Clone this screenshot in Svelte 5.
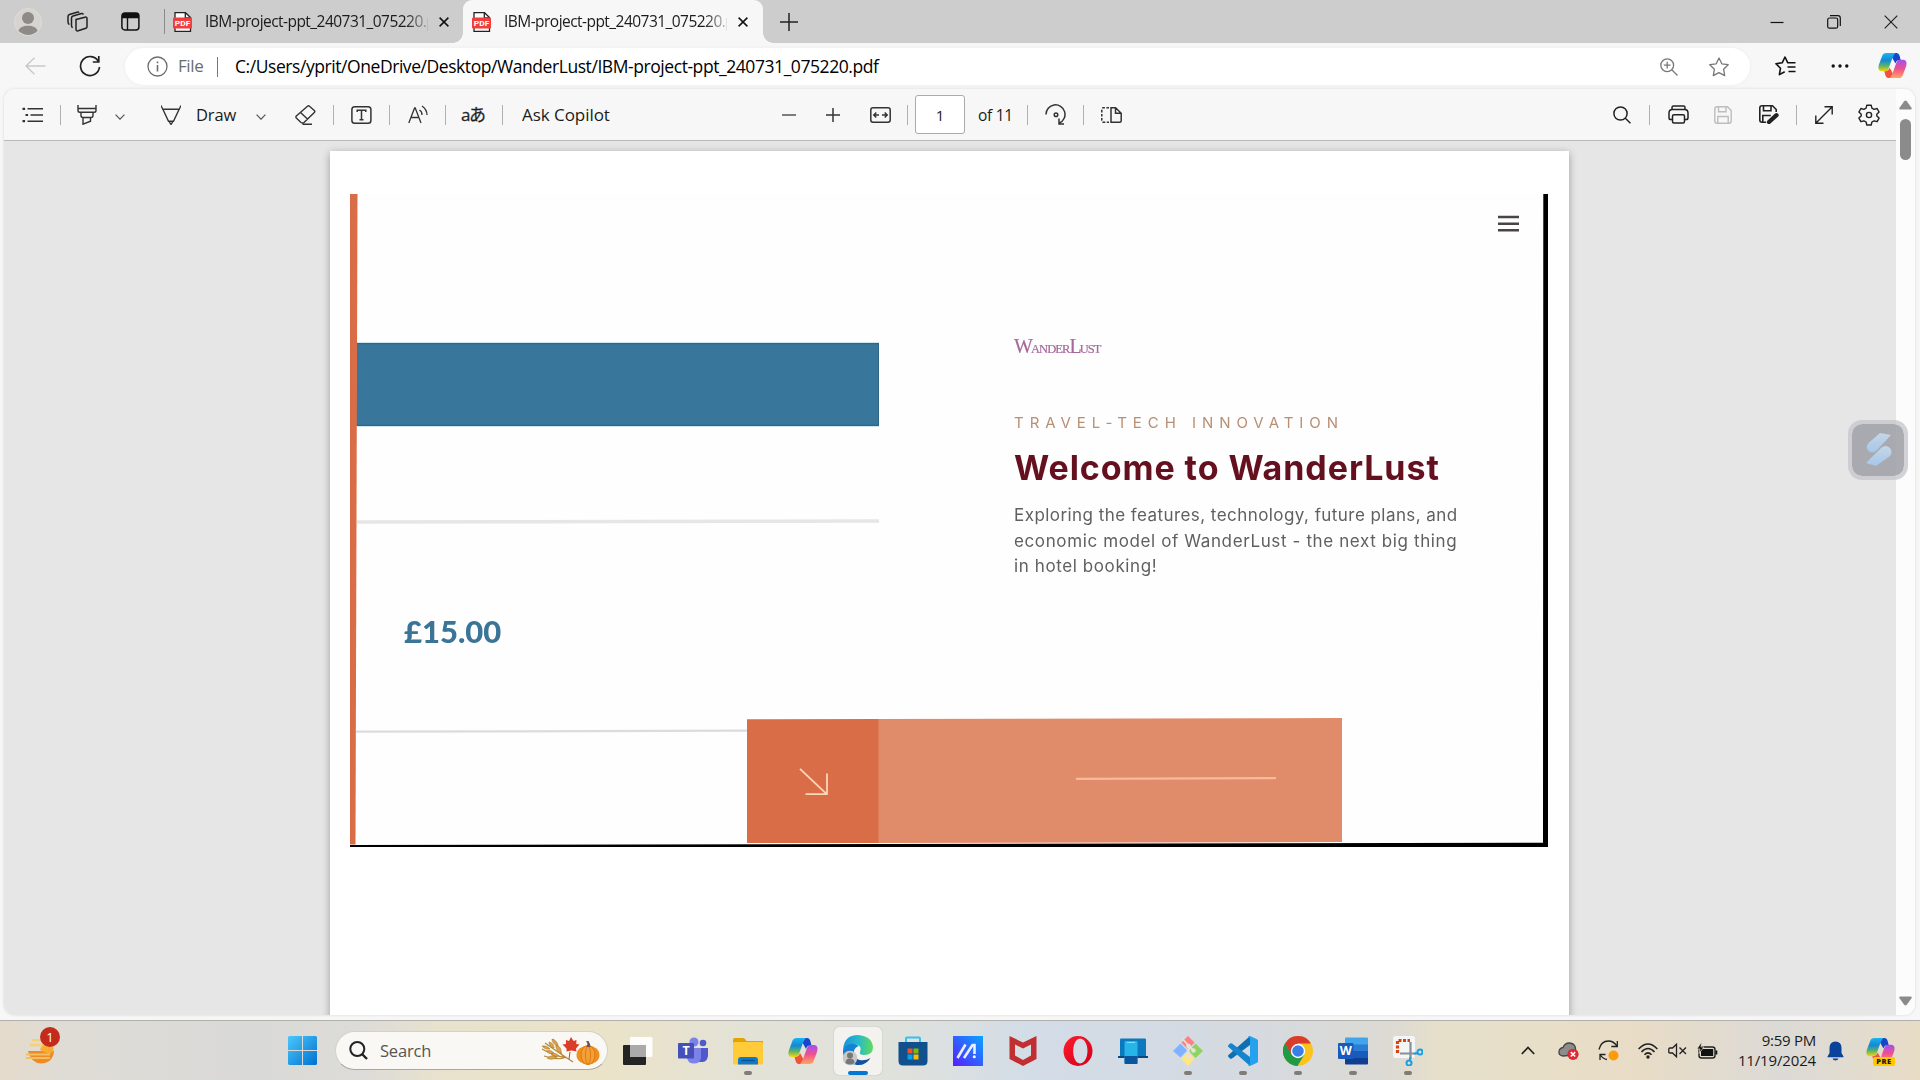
<script>
  const tabs = [
    { title: 'IBM-project-ppt_240731_075220.pdf', active: false },
    { title: 'IBM-project-ppt_240731_075220.pdf', active: true }
  ];
</script>

{#snippet pdf()}
  <svg class="pdf" width="20" height="20" viewBox="0 0 20 20">
    <path d="M2 .7h10.5L17.5 5.500V19.300H2z" fill="#fff" stroke="#222" stroke-width="1.300" />
    <path d="M12.300.8v5h5" fill="none" stroke="#222" stroke-width="1.300" />
    <rect x="0" y="5.500" width="19" height="11" rx="1.200" fill="#f03e3e" />
    <text x="9.500" y="14" text-anchor="middle" class="pdf-label" textLength="15.500" lengthAdjust="spacingAndGlyphs">PDF</text>
  </svg>
{/snippet}

{#snippet close()}
  <svg class="x" width="10" height="10" viewBox="0 0 10 10"><path d="M.6.6l8.800 8.800M9.400.6L.6 9.400" stroke="#111" stroke-width="1.500" /></svg>
{/snippet}

{#snippet copilot(size)}
  <svg class="cop" width={size} height={size * 28 / 30} viewBox="0 0 30 28">
    <defs>
      <linearGradient id="cl" x1="0" y1="0" x2="0" y2="1">
        <stop offset="0" stop-color="#19b4ee" /><stop offset=".4" stop-color="#1488d8" /><stop offset=".7" stop-color="#58b56a" /><stop offset="1" stop-color="#ffd500" />
      </linearGradient>
      <linearGradient id="cr" x1="0" y1="0" x2="0" y2="1">
        <stop offset="0" stop-color="#a24ff0" /><stop offset=".5" stop-color="#f0518f" /><stop offset="1" stop-color="#ffa75c" />
      </linearGradient>
    </defs>
    <path d="M12 1H19C22 1 22.500 4 23.500 8.500C20 8.500 19 9 18 12z" fill="#1746cc" />
    <path d="M18 27H11C8 27 7.500 24 6.500 19.500C10 19.500 11 19 12 16z" fill="#f2513b" />
    <path d="M9 1H18C15 4 13 12 11 17C10 19 9 20 7 20H4C0 20 0 16 1 13L4 5C5 2 6 1 9 1Z" fill="url(#cl)" />
    <path d="M21 27H12C15 24 17 16 19 11C20 9 21 8 23 8H26C30 8 30 12 29 15L26 23C25 26 24 27 21 27Z" fill="url(#cr)" />
  </svg>
{/snippet}

<div class="screen">
  <header class="tabstrip">
    <svg class="profile" width="28" height="28" viewBox="0 0 28 28"><circle cx="14" cy="14" r="13.500" fill="#d6d4d0" stroke="#dedcd2" /><circle cx="14" cy="10" r="6" fill="#8e8a86" /><path d="M4.500 23c1-7 18-7 19 0q-9 8-19 0" fill="#8e8a86" /></svg>
    <svg class="spaces" width="22" height="22" viewBox="0 0 22 22" fill="none" stroke="#222" stroke-width="1.500"><path d="M9 8.500l9-2.300q2-.5 2 1.500v8q0 1.200-1.200 1.600l-7.600 2.500q-2.200.6-2.200-1.500zM5.800 16.500q-1.300-.2-1.300-2V7q0-1.500 1.500-2l8.500-2.400q1.500-.3 1.700 1M2.500 13.500Q1 13 1 11V5.500Q1 4 2.500 3.500L10 1.200q1.600-.4 2 .6" /></svg>
    <svg class="actions" width="19" height="19" viewBox="0 0 19 19"><rect x=".9" y=".9" width="17" height="17" rx="3" fill="none" stroke="#111" stroke-width="1.500" /><path d="M1 4q0-3 3-3h11q3 0 3 3v2.200H1z" fill="#111" /><path d="M6.500 5v13" stroke="#111" stroke-width="1.400" /></svg>
    <i class="tab-div"></i>
    {#each tabs as tab}
      <div class="tab" class:active={tab.active}>
        {@render pdf()}
        <span class="tab-title">{tab.title}</span>
        {@render close()}
      </div>
    {/each}
    <svg class="newtab" width="18" height="18" viewBox="0 0 18 18"><path d="M9 0v18M0 9h18" stroke="#222" stroke-width="1.500" /></svg>
    <div class="wincontrols">
      <svg width="14" height="14" viewBox="0 0 14 14"><path d="M.5 7.500h13" stroke="#111" stroke-width="1.200" /></svg>
      <svg width="14" height="14" viewBox="0 0 14 14" fill="none" stroke="#111" stroke-width="1.200"><rect x=".7" y="3" width="10" height="10.200" rx="1.800" /><path d="M3 .7h8q2.300 0 2.300 2.300v8" /></svg>
      <svg width="14" height="14" viewBox="0 0 14 14"><path d="M.7.7l12.600 12.600M13.300.7L.7 13.300" stroke="#222" stroke-width="1.200" /></svg>
    </div>
  </header>

  <div class="addressrow">
    <svg class="back" width="21" height="18" viewBox="0 0 21 18"><path d="M9.500.8L1 9l8.500 8.200M1 9h19.500" fill="none" stroke="#c9c9c9" stroke-width="1.400" /></svg>
    <svg class="reload" width="22" height="22" viewBox="0 0 22 22" fill="none" stroke="#222" stroke-width="1.700"><path d="M19.300 6.300A9.500 9.500 0 1 0 20.500 12M19.800 1v6h-6" /></svg>
    <div class="pill">
      <svg class="info" width="21" height="21" viewBox="0 0 21 21" fill="none" stroke="#6d6d6d" stroke-width="1.300"><circle cx="10.500" cy="10.500" r="9.500" /><path d="M10.500 9v6.500M10.500 5.500v1.800" stroke-width="1.600" /></svg>
      <span class="file">File</span>
      <i class="pill-div"></i>
      <span class="url">C:/Users/yprit/OneDrive/Desktop/WanderLust/IBM-project-ppt_240731_075220.pdf</span>
      <svg class="zoomi" width="18" height="18" viewBox="0 0 18 18" fill="none" stroke="#777" stroke-width="1.300"><circle cx="7.200" cy="7.200" r="6.400" /><path d="M12 12l5.500 5.500M7.200 3.800v6.800M3.800 7.200h6.800" /></svg>
      <svg class="star" width="20" height="20" viewBox="0 0 20 20" fill="none" stroke="#777" stroke-width="1.300" stroke-linejoin="round"><path d="M10 1l2.800 5.800 6.400.9-4.600 4.500 1.100 6.400L10 15.600l-5.700 3 1.100-6.400L.8 7.700l6.400-.9z" /></svg>
    </div>
    <svg class="favs" width="21" height="20" viewBox="0 0 21 20" fill="none" stroke="#111" stroke-width="1.600" stroke-linejoin="round"><path d="M14 6.800h-1.200L10 1 7.200 6.800.9 7.700l4.600 4.500-1.100 6.400 5.300-2.800M14 6.800h6.500M12.500 11h8M13.500 15.500h7" /></svg>
    <svg class="dots" width="18" height="6" viewBox="0 0 18 6" fill="#111"><circle cx="2.200" cy="3" r="1.700" /><circle cx="9" cy="3" r="1.700" /><circle cx="15.800" cy="3" r="1.700" /></svg>
    {@render copilot(29)}
  </div>

  <main class="viewer">
    <div class="content">
      <div class="toolbar">
        <svg class="t-list" width="22" height="16" viewBox="0 0 22 16" stroke="#333" stroke-width="1.500"><path d="M5.500 1.800H21M8.500 8H21M5.500 14.200H21" /><path d="M.5 1.800h2.600M3.500 8h2.600M.5 14.200h2.600" stroke-width="2.200" /></svg>
        <i class="sep s1"></i>
        <svg class="t-hl" width="20" height="20" viewBox="0 0 20 20" fill="none" stroke="#333" stroke-width="1.400"><path d="M1 0v5.500q0 1.800 1.800 1.800h14.400q1.800 0 1.800-1.800V0M1.500 3.500h17M4 7.500v3q0 2 2 2h8q2 0 2-2v-3M6 12.500v6.700l7.500-3v-3.700" /></svg>
        <svg class="t-ch1" width="10" height="6" viewBox="0 0 10 6"><path d="M.6.7L5 5.200 9.400.7" fill="none" stroke="#555" stroke-width="1.200" /></svg>
        <svg class="t-pen" width="20" height="20" viewBox="0 0 20 20" fill="none" stroke="#333" stroke-width="1.400"><path d="M0 .5l1.800 3.700h16.400L20 .5M2 4.500l5.500 11.700h5L18 4.500M7.800 16l2.200 3.500 2.200-3.500" /></svg>
        <span class="t-draw">Draw</span>
        <svg class="t-ch2" width="10" height="6" viewBox="0 0 10 6"><path d="M.6.7L5 5.200 9.400.7" fill="none" stroke="#555" stroke-width="1.200" /></svg>
        <svg class="t-er" width="21" height="20" viewBox="0 0 21 20" fill="none" stroke="#333" stroke-width="1.400" stroke-linejoin="round"><path d="M12.500 1.300q1-.9 2 0l4.800 4.200q1 1 0 2L9 17.500q-1.500 1-3 0L1.300 13q-.8-1 0-2zM5.500 7.500l7 6.500M7.500 19.200H17" /></svg>
        <i class="sep s2"></i>
        <svg class="t-text" width="21" height="18" viewBox="0 0 21 18" fill="none" stroke="#333" stroke-width="1.500"><rect x=".9" y=".8" width="19" height="16.400" rx="2.800" /><path d="M6.200 6V4.300h8.600V6M10.500 4.300v9.500M8.500 13.800h4" /></svg>
        <i class="sep s3"></i>
        <svg class="t-read" width="20" height="19" viewBox="0 0 20 19" fill="none" stroke="#333" stroke-width="1.300"><path d="M.8 18L6.600 3h.6L13 18M2.800 12.500h8.200M11.500 5q2.600 1.700 2.500 5M14 1q5 3.500 5 9" /></svg>
        <i class="sep s4"></i>
        <span class="t-trans">aあ</span>
        <i class="sep s5"></i>
        <span class="t-ask">Ask Copilot</span>
        <svg class="t-minus" width="14" height="4" viewBox="0 0 14 4"><path d="M0 2h14" stroke="#555" stroke-width="1.500" /></svg>
        <svg class="t-plus" width="14" height="14" viewBox="0 0 14 14"><path d="M7 0v14M0 7h14" stroke="#333" stroke-width="1.500" /></svg>
        <svg class="t-fit" width="21" height="16" viewBox="0 0 21 16" fill="none" stroke="#333" stroke-width="1.500"><rect x=".8" y=".8" width="19.400" height="14.400" rx="2.200" /><path d="M9 8H4M6.300 5.500L3.800 8l2.500 2.500M12 8h5M14.700 5.500L17.200 8l-2.500 2.500" /></svg>
        <i class="sep s6"></i>
        <div class="pagebox">1</div>
        <span class="t-of">of 11</span>
        <i class="sep s7"></i>
        <svg class="t-rot" width="22" height="21" viewBox="0 0 22 21" fill="none" stroke="#333" stroke-width="1.500"><path d="M1 10.500A9.500 9.500 0 1 1 14.500 19M19 20h-5v-5.500" /><circle cx="11" cy="10.800" r="1.800" /></svg>
        <i class="sep s8"></i>
        <svg class="t-pages" width="21" height="16" viewBox="0 0 21 16" fill="none" stroke="#333" stroke-width="1.500"><path d="M10 .8h4.600l5.600 5.400v7.500q0 1.500-1.500 1.500H10zM14.500 1v5.300H20" /><path d="M8 .8H2.500Q.8.800.8 2.500V13.500q0 1.700 1.700 1.700H8" stroke-dasharray="2.600 1.500" /></svg>
        <div class="toolright">
          <svg class="r-search" width="18" height="18" viewBox="0 0 18 18" fill="none" stroke="#222" stroke-width="1.500"><circle cx="7.500" cy="7.500" r="6.600" /><path d="M12.300 12.300l5.200 5" /></svg>
          <i class="sep"></i>
          <svg class="r-print" width="21" height="19" viewBox="0 0 21 19" fill="none" stroke="#222" stroke-width="1.500"><path d="M4 4.500V2.500Q4 1 5.500 1h10Q17 1 17 2.500v2M4.500 14.500H2.800Q1 14.500 1 12.700V8q0-3.500 3.500-3.500h12Q20 4.500 20 8v4.700q0 1.800-1.800 1.800h-1.700" /><rect x="4.500" y="9.700" width="12" height="8.300" rx="1.500" /></svg>
          <svg class="r-save" width="18" height="18" viewBox="0 0 18 18" fill="none" stroke="#bdbdbd" stroke-width="1.400"><path d="M3 .8h10.500L17.200 4.500V15q0 2.200-2.200 2.200H3Q.8 17.200.8 15V3Q.8.800 3 .8zM4.500 1v4.700h7.500V1M3.800 17v-6.500h10.400V17" /></svg>
          <svg class="r-saveas" width="20" height="19" viewBox="0 0 20 19" fill="none" stroke="#222" stroke-width="1.600"><path d="M7 17.200H3Q.8 17.200.8 15V3Q.8.800 3 .8h10.500l3.700 3.700V7M4.500 1v4.700h7.500V1M3.800 17v-6.500h8" /><path d="M10 17l7.500-6.800" stroke-width="4.300" stroke-linecap="round" /></svg>
          <i class="sep q2"></i>
          <svg class="r-exp" width="18" height="18" viewBox="0 0 18 18" fill="none" stroke="#222" stroke-width="1.400"><path d="M1 17L17 1M9.500.8h7.700v7.700M.8 9.500v7.700h7.700" /></svg>
          <svg class="r-gear" width="22" height="22" viewBox="0 0 22 22" fill="none" stroke="#222" stroke-width="1.400" stroke-linejoin="round"><path d="M8.800 1.200h4.400l.7 3 2.200 1.200 3-.9 2 3.600-2.300 2.200v1.600l2.300 2.200-2 3.600-3-.9-2.200 1.200-.7 3H8.800l-.7-3-2.200-1.200-3 .9-2-3.600 2.300-2.200v-1.600L.9 8.100l2-3.600 3 .9 2.200-1.200z" /><circle cx="11" cy="11" r="2.600" /></svg>
        </div>
      </div>
      <div class="canvas">
        <div class="page">
          <div class="slide">
            <svg class="art" width="1198" height="653" viewBox="0 0 1198 653">
              <rect width="1198" height="653" fill="#fefefe" />
              <path d="M6.500 149H529V232H6z" fill="#38769c" />
              <path d="M7 148.500H529M7 232.500H529" stroke="#cfe6ec" stroke-width="1.200" />
              <path d="M7 149.700H529M7 231.300H529M528.500 149v83" stroke="#2f6485" stroke-width="1" />
              <path d="M7 328l522-1" stroke="#e6e6e6" stroke-width="3.600" />
              <path d="M6 537.700l391-1" stroke="#dcdcdc" stroke-width="2.200" />
              <path d="M0 0H7.500L5.500 650.500H0z" fill="#d96d47" />
              <path d="M397 525.300l132-.4V649H397z" fill="#d96d47" />
              <path d="M528.500 524.900L992 524V648l-463.500 1z" fill="#e08b6a" />
              <path d="M726 584.900l200-.7" stroke="#f8b99d" stroke-width="2.200" />
              <path d="M450 574.800l27 25.500M477 579.500v21M455.500 600.200h22" stroke="#fbd6b8" stroke-width="1.800" fill="none" />
              <path d="M1193.300 0H1198V653H0V651L1193 648.800z" fill="#000" />
            </svg>
            <span class="price">£15.00</span>
            <svg class="burger" width="21" height="17" viewBox="0 0 21 17"><path d="M0 2h21M0 8.700h21M0 15.300h21" stroke="#4a4444" stroke-width="2.500" /></svg>
            <div class="copy">
              <div class="logo"><b>W</b>ANDER<b>L</b>UST</div>
              <div class="eyebrow">TRAVEL-TECH INNOVATION</div>
              <h1>Welcome to WanderLust</h1>
              <p><span class="l1">Exploring the features, technology, future plans, and</span><span class="l2">economic model of WanderLust - the next big thing</span><span class="l3">in hotel booking!</span></p>
            </div>
          </div>
        </div>
      </div>
    </div>
    <div class="scrollbar">
      <svg width="13" height="10" viewBox="0 0 13 10"><path d="M5.200 1.300q1.300-1.500 2.600 0l4.700 6.500q.8 1.700-1 1.700H1.500q-1.800 0-1-1.700z" fill="#8b8b8b" /></svg>
      <i class="thumb"></i>
      <svg class="down" width="13" height="10" viewBox="0 0 13 10"><path d="M5.200 8.700q1.300 1.500 2.600 0l4.700-6.500q.8-1.700-1-1.700H1.500q-1.800 0-1 1.700z" fill="#8b8b8b" /></svg>
    </div>
  </main>

  <div class="widget">
    <svg width="54" height="54" viewBox="0 0 54 54">
      <defs><linearGradient id="wg" x1="0" y1="0" x2="0" y2="1"><stop offset="0" stop-color="#c5d7e8" /><stop offset="1" stop-color="#a6c6e8" /></linearGradient></defs>
      <path d="M29 10l11 2-15 16q-4 3-7.500 0-3.500-4 0-8z" fill="url(#wg)" />
      <path d="M25 43l-10-3 15-15q5-4 9 0 3 4 0 8z" fill="url(#wg)" />
    </svg>
  </div>

  <footer class="taskbar">
    <div class="news">
      <svg width="30" height="26" viewBox="0 0 30 26"><path d="M6 1h8M4 6h13" stroke="#f5d26f" stroke-width="2.600" /><path d="M2 12H28Q27 24 15 24.500Q5 24 2 12z" fill="#f08a24" /><path d="M14 11q1-6 8-6 6 0 5.500 6-1 3-5 4z" fill="#f8ac32" /><path d="M0 15.500h24M0 19h24" stroke="#f0c066" stroke-width="2" /></svg>
      <span class="badge">1</span>
    </div>
    <svg class="win" width="29" height="29" viewBox="0 0 29 29"><defs><linearGradient id="w" x1="0" y1="0" x2="1" y2="1"><stop offset="0" stop-color="#4cc8fb" /><stop offset="1" stop-color="#0071d2" /></linearGradient></defs><path d="M1 0h13v14H0V1zM15 0h13l1 1v13H15zM0 15h14v14H1l-1-1zM15 15h14v13l-1 1H15z" fill="url(#w)" /></svg>
    <div class="search">
      <svg width="19" height="19" viewBox="0 0 19 19" fill="none" stroke="#222" stroke-width="2"><circle cx="8.300" cy="8" r="7" /><path d="M13 13l5 5" stroke-width="2.400" /></svg>
      <span>Search</span>
      <svg class="autumn" width="59" height="28" viewBox="0 0 59 28">
        <path d="M4 6Q18 16 32 25M12 2q6 8 10 18M1 12q12 7 25 9M3 19q12 4 20 2" stroke="#b5883b" stroke-width="1.200" fill="none" />
        <path d="M1 9q5-1 8 3-5 1-8-3M5 14q5-2 8 2-5 2-8-2M11 2q6 2 6 7-6-2-6-7M15 8q6 2 5 8-6-3-5-8M6 21q5-4 10-1-5 4-10 1M8 5q5 1 5 6-5-1-5-6M10 17q5-2 8 2-5 2-8-2" fill="#d6a450" stroke="#b27b2c" stroke-width=".6" />
        <path d="M29 15l-1 7" stroke="#a3502b" />
        <path d="M30 0l2.500 4 3-1-.3 4 3.300.5-3.500 4 .5 3-5-1-5 1v-3l-4-4 3.500-.5V3l3 1z" fill="#dc3d28" />
        <ellipse cx="47" cy="18" rx="11.500" ry="9.500" fill="#ee9020" /><ellipse cx="47" cy="18" rx="7" ry="9.500" fill="#f3a136" stroke="#d97512" stroke-width=".9" /><ellipse cx="47" cy="18" rx="2.500" ry="9.300" fill="none" stroke="#d97512" stroke-width=".9" />
        <path d="M45.500 10q2-3-.5-6h2.500q2 3 2 6z" fill="#6e5060" />
      </svg>
    </div>

    <nav class="apps">
      <span class="app"><svg width="30" height="30" viewBox="0 0 30 30"><rect x="0" y="9" width="23" height="20" rx="1" fill="#242424" /><rect x="7" y="1" width="22.500" height="20" rx="1" fill="#fff" opacity=".9" /><rect x="7" y="9" width="16" height="12" fill="#aaa" /></svg></span>
      <span class="app"><svg width="30" height="30" viewBox="0 0 30 30"><circle cx="16" cy="6" r="4.600" fill="#7b83eb" /><circle cx="25" cy="7" r="3.300" fill="#5059c9" /><path d="M21 12h9v8q-1 6-6 6h-3z" fill="#5059c9" /><path d="M9 12h14v10q-1 5.500-7 5.500T9 22z" fill="#7b83eb" /><rect x="0" y="7" width="16" height="15.500" rx="1" fill="#464eb8" /><text x="8" y="19" text-anchor="middle" class="tile-letter">T</text></svg></span>
      <span class="app run"><svg width="30" height="30" viewBox="0 0 30 30"><path d="M0 4q0-2 2-2h8q2 0 3.500 3H30v4H0z" fill="#e2a200" /><rect y="6" width="30" height="22.500" rx="1.500" fill="#ffcb38" /><path d="M5 28.500V24q0-3 3-3h14q3 0 3 3v4.500z" fill="#0f79cc" /><path d="M8.500 24.500h13" stroke="#0a5494" stroke-width="1.500" /></svg></span>
      <span class="app">{@render copilot(30)}</span>
      <span class="app current"><svg width="32" height="31" viewBox="0 0 32 31"><defs><linearGradient id="e" x1="0" x2="1"><stop offset="0" stop-color="#1593d8" /><stop offset=".5" stop-color="#26b9cc" /><stop offset="1" stop-color="#61dc57" /></linearGradient></defs><path d="M1 15Q2 0 16 0q14 1 15 12 0 8-9 8-5 0-4-3 2-5-2-7Q7 8 1 15z" fill="url(#e)" /><path d="M1 15Q0 29 16 30 9 24 12 16q1-4 5-5-10-6-16 4z" fill="#1581d3" /><path d="M11.500 16q-1 7 6 9 6 1 11-2-5 8-14 7Q8 25 11.500 16z" fill="#10529d" /><circle cx="8" cy="23" r="7.300" fill="#c8c8c6" /><circle cx="8" cy="20.500" r="3" fill="#777" /><path d="M3.500 28q0-4.500 4.500-4.500t4.500 4.500q-4 3-9 0" fill="#777" /></svg></span>
      <span class="app"><svg width="30" height="30" viewBox="0 0 30 30"><path d="M8 7V2.500Q8 1.500 9 1.500h12q1 0 1 1V7" fill="none" stroke="#31c0f3" stroke-width="2" /><path d="M.5 6h29v19q0 4.500-4.500 4.500H5Q.5 29.500.5 25z" fill="#10508c" /><path d="M9.500 12.500h5v5h-5z" fill="#f25022" /><path d="M15.500 12.500h5v5h-5z" fill="#7fba00" /><path d="M9.500 18.500h5v5h-5z" fill="#00a4ef" /><path d="M15.500 18.500h5v5h-5z" fill="#ffb900" /></svg></span>
      <span class="app"><svg width="30" height="30" viewBox="0 0 30 30"><defs><linearGradient id="m" x1="0" y1="1" x2="1" y2="0"><stop offset="0" stop-color="#5a1cff" /><stop offset="1" stop-color="#08a4ff" /></linearGradient></defs><rect width="30" height="30" fill="url(#m)" /><path d="M4.500 22L12.500 8.500M11 22L19.500 9H21.500V18" fill="none" stroke="#e6f1ff" stroke-width="2.600" /><circle cx="21.300" cy="20.800" r="1.500" fill="#fff" /></svg></span>
      <span class="app"><svg width="28" height="30" viewBox="0 0 28 30"><path d="M.5 0L14 6.500 27.500 0v23L14 30 .5 23zM6 8.500v11l8 4.500 8-4.500v-11l-8 4z" fill="#c12f30" fill-rule="evenodd" /></svg></span>
      <span class="app"><svg width="30" height="30" viewBox="0 0 30 30"><defs><linearGradient id="o" x1="0" y1="0" x2="1" y2="1"><stop offset="0" stop-color="#ff1b2d" /><stop offset="1" stop-color="#d00018" /></linearGradient></defs><path d="M15 0a14.500 15 0 1 0 0 30 14.500 15 0 1 0 0-30zM17 2.500c10 1 10 24 0 25-9-1-9-24 0-25z" fill="url(#o)" fill-rule="evenodd" /></svg></span>
      <span class="app"><svg width="30" height="30" viewBox="0 0 30 30"><path d="M3 2.500h24q1 0 1 1V20H2V3.500q0-1 1-1z" fill="#0c78bd" /><path d="M0 20h30v2H0z" fill="#064a7c" /><rect x="6.500" y="5" width="13" height="23" rx="1" fill="#25b5e8" /><path d="M6.500 20h13v7q0 1-1 1h-11q-1 0-1-1z" fill="#0a559b" /><path d="M9 6.500h8" stroke="#7ae4ff" /></svg></span>
      <span class="app run"><svg width="30" height="30" viewBox="0 0 30 30"><path d="M15 0l6.500 6.500-6.500 7-6.500-7z" fill="#ff8080" /><path d="M7.500 7.500l6.500 7-6.500 7L0 15z" fill="#80b3ff" /><path d="M22.500 7.500L30 15l-7.500 7-6.500-7z" fill="#8dd35f" /><path d="M15 16l6.500 6.500L15 30l-7-7.500z" fill="#ffe680" /><path d="M9.500 3l6 6.500v11M15.500 9.500l5.500 5.500" fill="none" stroke="#e6e2da" stroke-width="1.800" /><circle cx="15.500" cy="10" r="2.300" fill="#e6e2da" /><circle cx="15.500" cy="20.500" r="2.300" fill="#e6e2da" /><circle cx="20.500" cy="14.500" r="2.300" fill="#e6e2da" /></svg></span>
      <span class="app run"><svg width="30" height="30" viewBox="0 0 30 30"><path d="M22 0v9L4 22.500q-1 .7-2 0l-1.500-1.500q-1-1 0-2z" fill="#0f6fb3" /><path d="M22 30v-9L4 7.500q-1-.7-2 0L.5 9q-1 1 0 2z" fill="#1484cc" /><path d="M22 0l7 3.200q1 .5 1 1.500v20.600q0 1-1 1.500L22 30q-1 .3-2-1 2 0 2-2V3q0-2-2-2 1-1.300 2-1z" fill="#25a2ee" /></svg></span>
      <span class="app run"><svg width="30" height="30" viewBox="0 0 30 30"><circle cx="15" cy="15" r="15" fill="#fcc31e" /><path d="M15 15L2 7.500A15 15 0 0 1 28 7.500H15z" fill="#d93b2c" /><path d="M2 7.500A15 15 0 0 0 14.500 30L21.500 18.500 15 15 8 17z" fill="#219a46" /><path d="M2 7.500L8.500 18.500 15 15 13 7.500z" fill="#d93b2c" /><path d="M2 7.500L8.600 18.700Q11 22 15 22L14.500 30A15 15 0 0 1 2 7.500" fill="#219a46" /><circle cx="15" cy="15" r="7.200" fill="#fff" /><circle cx="15" cy="15" r="5.800" fill="#3a7ee8" /></svg></span>
      <span class="app run"><svg width="30" height="30" viewBox="0 0 30 30"><path d="M7 2.500q0-1 1-1h21q1 0 1 1V9H7z" fill="#41a5ee" /><path d="M7 8.500h23V15H7z" fill="#2b7cd3" /><path d="M7 15h23v7H7z" fill="#185abd" /><path d="M7 22h23v5.500q0 1-1 1H8q-1 0-1-1z" fill="#103f91" /><rect y="7" width="15.500" height="16" rx="1" fill="#185abd" /><text x="7.800" y="19" text-anchor="middle" class="tile-letter">W</text></svg></span>
      <span class="app run"><svg width="30" height="30" viewBox="0 0 30 30"><rect width="22" height="22" rx="2.500" fill="#f4f5f6" /><path d="M4.500 17V4.500H17" fill="none" stroke="#d9420f" stroke-width="3.200" stroke-dasharray="3 1.500" /><path d="M17.500 6v17M7 17.500h17" stroke="#888f95" stroke-width="2.200" /><circle cx="27" cy="16" r="2.500" fill="none" stroke="#1a9fe0" stroke-width="2" /><circle cx="16" cy="27" r="2.500" fill="none" stroke="#1a9fe0" stroke-width="2" /><path d="M17.500 21l-.7 3.500M21 17.700l3.500-.8" stroke="#1a9fe0" stroke-width="2" /></svg></span>
    </nav>

    <div class="tray">
      <svg class="up" width="14" height="9" viewBox="0 0 14 9"><path d="M.8 8L7 1.500 13.200 8" fill="none" stroke="#222" stroke-width="1.700" /></svg>
      <svg class="cloud" width="22" height="18" viewBox="0 0 22 18"><path d="M5 14q-4.500-.5-4-4.500Q1.500 6 5 5.500 7 .8 11.500 1q5 .3 6 5v7z" fill="#8c8c8c" stroke="#444" stroke-width="1.300" /><circle cx="15" cy="12.300" r="5.600" fill="#d92b35" /><path d="M12.800 10.100l4.400 4.400M17.200 10.100l-4.400 4.400" stroke="#fff" stroke-width="1.600" /></svg>
      <svg class="sync" width="21" height="21" viewBox="0 0 21 21" fill="none" stroke="#222" stroke-width="1.300"><path d="M1 9.500Q3 1 10.500 1q5 0 8.500 5M19.300 1v5.500h-6M9 19.500Q5 19 2 14.500M2 20v-5.500h5.500" /><circle cx="15.500" cy="15.500" r="5" fill="#ff9a08" stroke="none" /></svg>
      <svg class="wifi" width="20" height="16" viewBox="0 0 20 16" fill="none" stroke="#222" stroke-width="1.600"><path d="M.6 6q9.400-10 18.800 0M3.500 9q6.500-7 13 0M6.500 11.700q3.500-3.700 7 0" /><circle cx="10" cy="14" r="1.700" fill="#222" stroke="none" /></svg>
      <svg class="vol" width="19" height="15" viewBox="0 0 19 15" fill="none" stroke="#222" stroke-width="1.300"><path d="M8.500 1.200v12.600L4.500 10H2Q.8 10 .8 9V6Q.8 5 2 5h2.500zM11.500 4.500l6.500 6.500M18 4.500L11.500 11" /></svg>
      <svg class="bat" width="21" height="17" viewBox="0 0 21 17"><rect x="2" y="5" width="16" height="11" rx="2.500" fill="none" stroke="#222" stroke-width="1.400" /><path d="M4 7h12.200v7H4zM18.500 8.500h1.800v4h-1.800z" fill="#111" /><path d="M4.500 0L0 7h3l-1 4.500L7 5H4z" fill="#111" stroke="#e8dfca" stroke-width=".7" /></svg>
      <div class="clock"><span>9:59 PM</span><span class="date">11/19/2024</span></div>
      <svg class="bell" width="17" height="20" viewBox="0 0 17 20" fill="#0b429b"><path d="M8.500.5q6 .3 6 6.500v5l2 3.500v.8H.5v-.8l2-3.500V7q0-6.200 6-6.500zM5.500 17.500h6q-.7 2-3 2t-3-2z" /></svg>
      <div class="pre">{@render copilot(29)}<span>PRE</span></div>
    </div>
  </footer>
</div>

<style>
  :global(body) { margin: 0; overflow: hidden; }
  .screen { width: 1920px; height: 1080px; display: flex; flex-direction: column; position: relative; overflow: hidden; background: #f7f7f7; font-family: "Open Sans", "Noto Sans", sans-serif; color: #1b1b1b; }
  svg { display: block; flex: none; }
  i { display: block; flex: none; }
  span, .clock { white-space: nowrap; }

  .tabstrip { height: 43px; flex: none; background: #cdcdcd; display: flex; align-items: center; }
  .profile { margin-left: 14px; }
  .spaces { margin-left: 25px; }
  .actions { margin-left: 32px; }
  .tab-div { width: 1px; height: 25px; margin-left: 24px; background: #8a8a8a; }
  .tab { position: relative; width: 298px; height: 43px; display: flex; align-items: center; box-sizing: border-box; padding-left: 8px; }
  .tab.active { width: 300px; padding-left: 9px; background: #f7f7f7; border-radius: 9px 9px 0 0; }
  .tab.active::before, .tab.active::after { content: ""; position: absolute; bottom: 0; width: 10px; height: 10px; }
  .tab.active::before { right: 100%; background: radial-gradient(circle at 0 0, transparent 9.500px, #f7f7f7 10px); }
  .tab.active::after { left: 100%; background: radial-gradient(circle at 100% 0, transparent 9.500px, #f7f7f7 10px); }
  .pdf-label { font: 700 7.500px Roboto, sans-serif; fill: #fff; }
  .tab-title { margin: -2px 0 0 12px; width: 223px; overflow: hidden; font-size: 15.500px; line-height: 24px; letter-spacing: -0.540px; -webkit-mask-image: linear-gradient(90deg, #000 90%, #0003); mask-image: linear-gradient(90deg, #000 90%, #0003); }
  .x { margin: 1px 0 0 11px; }
  .newtab { margin-left: 17px; }
  .wincontrols { display: flex; gap: 43px; margin-left: auto; padding-right: 22px; }

  .addressrow { height: 46px; flex: none; display: flex; align-items: center; }
  .back { margin-left: 25px; }
  .reload { margin-left: 33px; }
  .pill { width: 1625px; height: 37px; margin: 1px 0 0 24px; border-radius: 19px; background: #fff; box-shadow: 0 0 4px #0000000c; display: flex; align-items: center; }
  .info { margin-left: 22px; }
  .file { margin: -2px 0 0 10px; width: 26px; font-size: 17px; color: #6b6b6b; letter-spacing: -0.400px; }
  .pill-div { width: 1px; height: 20px; margin-left: 13px; background: #777; }
  .url { margin: -2px 0 0 17px; width: 650px; font-size: 17.500px; letter-spacing: -0.435px; color: #000; }
  .zoomi { margin-left: auto; }
  .star { margin: 0 21px 0 31px; }
  .favs { margin-left: 25px; }
  .dots { margin-left: 35px; }
  .dots + :global(.cop) { margin-left: 29px; }

  .viewer { margin: 0 5px 0 4px; height: 926px; flex: none; border-radius: 11px; overflow: hidden; display: flex; box-shadow: 0 0 3px #00000024; }
  .content { width: 1892px; flex: none; display: flex; flex-direction: column; }
  .toolbar { height: 51px; box-sizing: content-box; border-bottom: 1px solid #b9b9b9; background: #f7f7f7; display: flex; align-items: center; }
  .sep { width: 1px; height: 20px; background: #b0b0b0; }
  .t-list { margin-left: 18px; }
  .s1 { margin-left: 16px; }
  .t-hl { margin-left: 16px; }
  .t-ch1 { margin: 4px 0 0 18px; }
  .t-pen { margin-left: 36px; }
  .t-draw { margin-left: 15px; width: 42px; font-size: 16.500px; letter-spacing: -0.150px; }
  .t-ch2 { margin: 4px 0 0 18px; }
  .t-er { margin-left: 29px; }
  .s2 { margin-left: 17px; }
  .t-text { margin-left: 17px; }
  .s3 { margin-left: 17px; }
  .t-read { margin-left: 18px; }
  .s4 { margin-left: 17px; }
  .t-trans { margin-left: 15px; width: 27px; font: 17px "Open Sans", "Noto Sans CJK JP", sans-serif; line-height: 24px; letter-spacing: -1.500px; -webkit-text-stroke: .3px #333; }
  .s5 { margin-left: 14px; }
  .t-ask { margin-left: 19px; width: 91px; font-size: 17px; letter-spacing: -0.050px; }
  .t-minus { margin-left: 169px; }
  .t-plus { margin-left: 30px; }
  .t-fit { margin-left: 30px; }
  .s6 { margin-left: 16px; }
  .pagebox { width: 48px; height: 37px; margin-left: 7px; border: 1px solid #ababab; border-radius: 3px; background: #fff; font-size: 15px; line-height: 38px; text-align: center; }
  .t-of { margin-left: 13px; width: 36px; font-size: 15.500px; letter-spacing: -0.300px; }
  .s7 { margin-left: 13px; }
  .t-rot { margin-left: 17px; }
  .s8 { margin-left: 16px; }
  .t-pages { margin-left: 17px; }
  .toolright { display: flex; align-items: center; margin-left: auto; padding-right: 16px; }
  .r-search { margin-right: 18px; }
  .r-print { margin-left: 18px; }
  .r-save { margin-left: 25px; }
  .r-saveas { margin-left: 27px; }
  .q2 { margin-left: 17px; }
  .r-exp { margin-left: 18px; }
  .r-gear { margin-left: 25px; }

  .canvas { flex: 1; min-height: 0; background: #e6e6e6; padding: 10px 0 0 326px; overflow: hidden; }
  .page { width: 1239px; height: 1100px; box-sizing: border-box; padding: 43px 0 0 20px; background: #fff; box-shadow: 0 2px 8px #00000052; }
  .slide { position: relative; width: 1198px; height: 653px; }
  .price { position: absolute; left: 54px; top: 417px; font: 900 31px/40px Lato, sans-serif; color: #3a7497; filter: blur(.4px); }
  .burger { position: absolute; left: 1148px; top: 21px; }
  .copy { position: absolute; left: 664px; top: 138px; width: 460px; font-family: Inter, sans-serif; filter: blur(.3px); }
  .logo { height: 28px; font: 12.500px/28px "Liberation Serif", serif; color: #a4689a; letter-spacing: -0.900px; margin-bottom: 51px; -webkit-text-stroke: .2px #a4689a; }
  .logo b { font-size: 20px; font-weight: 400; letter-spacing: -2px; }
  .eyebrow { height: 24px; font-size: 15px; line-height: 24px; color: #b98f73; letter-spacing: 5.950px; white-space: nowrap; }
  h1 { margin: 11px 0 0; font-size: 34px; line-height: 44px; font-weight: 700; color: #65101f; letter-spacing: .920px; white-space: nowrap; }
  p { margin: 13px 0 0; font-size: 17px; line-height: 25.700px; color: #606060; display: flex; flex-direction: column; }
  .l1 { letter-spacing: .440px; }
  .l2 { letter-spacing: .620px; }
  .l3 { letter-spacing: .600px; }

  .scrollbar { width: 19px; background: #fcfcfc; display: flex; flex-direction: column; align-items: center; padding-top: 11px; box-sizing: border-box; }
  .thumb { width: 11px; height: 41px; border-radius: 6px; background: #8b8b8b; margin-top: 9px; }
  .down { margin: auto 0 9px; }

  .widget { position: absolute; left: 1848px; top: 420px; width: 60px; height: 60px; box-sizing: border-box; border: 4px solid #c8c8cdcc; border-radius: 14px; background: #a3a3aae8; background-clip: padding-box; display: flex; align-items: center; justify-content: center; }

  .taskbar { height: 60px; box-sizing: border-box; margin-top: auto; border-top: 1px solid #b0afab; display: flex; align-items: center; background: linear-gradient(90deg, #e5dacb 0, #dfdcd5 60px, #d9d9d8 250px, #dddcd7 370px, #e8e2cd 440px, #ebe3c8 600px, #e3e2d7 750px, #dfe1dc 900px, #d3dde7 1030px, #d3dbe5 1120px, #d6dae0 1260px, #dcdad3 1390px, #e6dfca 1440px, #e8dfc8 1550px, #e8dcc6 1640px, #dcdad6 1780px, #e2dcd0 1850px, #e8dcc6 1920px); }
  .news { position: relative; margin: 2px 0 0 26px; }
  .badge { position: absolute; left: 14px; top: -12px; width: 20px; height: 20px; border-radius: 50%; background: #c42b1c; color: #fff; font-size: 13px; line-height: 20px; text-align: center; }
  .win { margin-left: 232px; }
  .search { width: 271px; height: 37px; margin-left: 18px; border: 1px solid #d4d1c9; border-bottom-color: #aaa79d; border-radius: 20px; background: #faf8f4; display: flex; align-items: center; }
  .search svg:first-child { margin-left: 13px; }
  .search span { margin: -1px 0 0 12px; width: 60px; font-size: 16.500px; letter-spacing: -0.200px; color: #555; }
  .autumn { margin-left: auto; margin-right: 7px; }
  .apps { display: flex; gap: 7px; margin-left: 6px; }
  .app { position: relative; width: 48px; height: 48px; display: flex; align-items: center; justify-content: center; border-radius: 5px; }
  .app.current { background: #f3f2ee; box-shadow: 0 0 1px #0005; }
  .app.run::after, .app.current::after { content: ""; position: absolute; bottom: 0; width: 8px; height: 4px; border-radius: 2px; background: #807d78; }
  .app.current::after { width: 20px; background: #0078d4; }
  .tile-letter { font: 700 12.500px "Open Sans", sans-serif; fill: #fff; }
  .tray { display: flex; align-items: center; margin-left: auto; padding-right: 25px; }
  .cloud { margin-left: 23px; }
  .sync { margin-left: 18px; }
  .wifi { margin-left: 19px; }
  .vol { margin-left: 10px; }
  .bat { margin-left: 10px; }
  .clock { width: 80px; margin: -2px 0 0 18px; display: flex; flex-direction: column; align-items: flex-end; font-size: 15px; line-height: 20px; letter-spacing: -0.250px; }
  .date { letter-spacing: -0.150px; }
  .bell { margin-left: 11px; }
  .pre { position: relative; margin-left: 22px; }
  .pre span { position: absolute; left: 7px; bottom: -2px; width: 22px; height: 9px; border-radius: 2px; background: #ffc800; font: 800 7.500px/9px "Open Sans", sans-serif; letter-spacing: .500px; text-align: center; }
</style>
